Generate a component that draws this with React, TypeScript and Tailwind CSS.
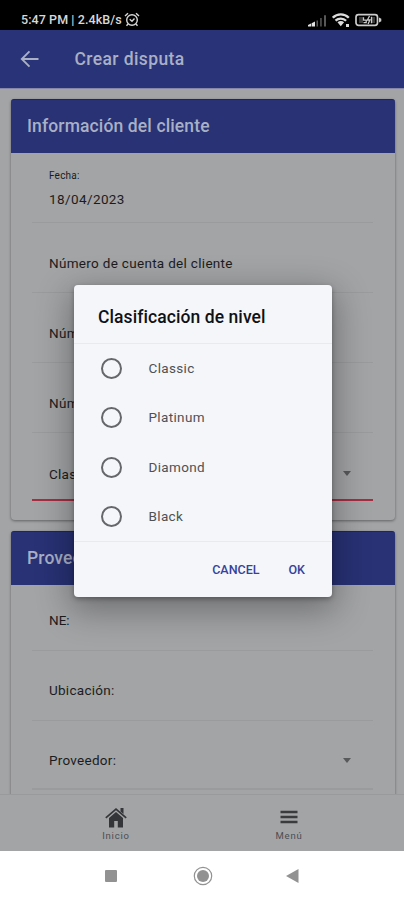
import type { ReactNode } from "react";

function StatusBar() {
  return (
    <div className="flex h-[30px] shrink-0 items-end justify-between bg-black pr-[22px] pb-[3px] pl-[21px] text-[#d8d8d8]">
      <div className="flex items-center gap-[2px]">
        <span className="w-[101px] text-[12.500px] leading-[14px] font-medium tracking-[0.080px] whitespace-nowrap">5:47 PM | 2.4kB/s</span>
        <svg width="16" height="15" viewBox="0 0 16 15" fill="none" stroke="currentColor" strokeWidth="1.4">
          <circle cx="8" cy="8" r="5.3" />
          <path d="M1 4 4 1.2M15 4l-3-2.8M5.7 7.3 8 9.3l2.5-2.7M4 12l-1.5 1.8M12 12l1.5 1.8" />
        </svg>
      </div>
      <div className="flex items-center gap-[5px]">
        <svg width="19" height="13" viewBox="0 0 19 13">
          <path d="M0 12.5V11l3-1.4v2.9zM3.6 12.5V9.2L7 7.4v5.1z" fill="#e2e2e2" />
          <path d="M8.5 12.5V6.5h1.500v6zM12.2 12.5V4h1.500v8.500zM16 12.500V1.200h2v11.300z" fill="#585858" />
        </svg>
        <svg width="18" height="14" viewBox="0 0 18 14" fill="none" stroke="#dcdcdc" strokeWidth="2.300">
          <path d="M.8 4.700C5.300.3 12.300.3 16.800 4.700M3.500 7.700c3-2.900 7.700-2.900 10.600 0" />
          <path d="m5.500 9.200 3.300 4 3.300-4c-2-1.500-4.600-1.500-6.600 0z" fill="#dcdcdc" stroke="none" />
          <path d="M14 11h3v3h-3z" fill="#dcdcdc" stroke="none" />
        </svg>
        <svg width="27" height="14" viewBox="0 0 27 14" fill="none" stroke="#ccc" strokeWidth="1.700">
          <rect x="1" y="1.700" width="21.500" height="10.600" rx="2.500" />
          <path d="M24 4.500v5l2.300-1.300V5.800z" fill="#ccc" stroke="none" />
          <path d="M4 4h4v6H4zM16.500 4h3.500v6h-3.500z" fill="#3a3a3a" stroke="none" />
          <path d="M8.500 4.300v2.800h2.700v2.500H8.500M16.500 3.700v6.500M14.500 3 12.400 7h2.500l-1.800 4" strokeWidth="1.300" />
        </svg>
      </div>
    </div>
  );
}

function Caret() {
  return <span className="mr-[22px] h-0 w-0 border-x-[4.5px] border-t-[5px] border-x-transparent border-t-[#58595b]" />;
}

function Row({ children }: { children: ReactNode }) {
  return (
    <div className="mr-[22px] ml-[21px] flex h-[70px] shrink-0 items-center border-b border-[#999b9d] pt-[11px] pl-[17px] text-[13.500px] leading-4 tracking-[0.310px]">
      <span className="whitespace-nowrap">{children}</span>
    </div>
  );
}

function CardTitle({ children }: { children: ReactNode }) {
  return (
    <h2 className="flex h-[54px] shrink-0 items-center rounded-t-[3px] border-t border-[#1c2565] bg-[#283275] pl-[16px] text-[17.500px] font-medium tracking-[0.130px] whitespace-nowrap text-[#a9b0c5]">
      {children}
    </h2>
  );
}

function Tab({ label, children, className }: { label: string; children: ReactNode; className: string }) {
  return (
    <div className={`flex w-[60px] flex-col items-center ${className}`}>
      <div className="flex h-[22px] items-center">{children}</div>
      <span className="mt-[2px] text-[9.500px] leading-3 tracking-[0.800px] text-[#4c4d50]">{label}</span>
    </div>
  );
}

const levels = ["Classic", "Platinum", "Diamond", "Black"];

export default function App() {
  return (
    <div className="relative flex h-[900px] w-[404px] flex-col overflow-hidden bg-[#a3a4a6] font-['Roboto',sans-serif] text-[#1b1c1e]">
      <StatusBar />
      <header className="flex h-[58px] shrink-0 items-center bg-[#293377] pl-[20px] text-[#a9b0c5]">
        <svg width="20" height="18" viewBox="0 0 20 18" fill="none" stroke="currentColor" strokeWidth="1.900">
          <path d="M18.500 9H2M9.500 1.300 1.800 9l7.700 7.700" />
        </svg>
        <h1 className="ml-[34.500px] text-[17.500px] font-medium tracking-[0.400px] whitespace-nowrap">Crear disputa</h1>
      </header>
      <main className="flex min-h-0 flex-1 flex-col gap-[11px] overflow-hidden border-t border-[#8687a8] pt-[10px] pr-[9px] pl-[11px]">
        <section className="flex h-[421px] shrink-0 flex-col rounded-[4px] shadow-[0_1px_3px_rgba(0,0,0,0.400)]">
          <CardTitle>Información del cliente</CardTitle>
          <div className="mr-[22px] ml-[21px] h-[70px] shrink-0 border-b border-[#999b9d] pt-[17px] pl-[17px]">
            <div className="text-[10px] leading-3 tracking-[0.200px]">Fecha:</div>
            <div className="mt-[9px] text-[13.500px] leading-4 tracking-[0.400px]">18/04/2023</div>
          </div>
          <Row>Número de cuenta del cliente</Row>
          <Row>Número de tarjeta</Row>
          <Row>Número de contacto</Row>
          <div className="mr-[22px] ml-[21px] flex h-[68px] shrink-0 items-center justify-between border-b-2 border-[#a62d42] pt-[15px] pl-[17px] text-[13.500px] leading-4 tracking-[0.270px]">
            <span>Clasificación</span>
            <Caret />
          </div>
        </section>
        <section className="flex h-[300px] shrink-0 flex-col rounded-[4px] shadow-[0_1px_3px_rgba(0,0,0,0.400)]">
          <CardTitle>Proveedor</CardTitle>
          <div className="mr-[22px] ml-[21px] flex h-[66px] shrink-0 items-center border-b border-[#999b9d] pt-[6px] pl-[17px] text-[13.500px]">NE:</div>
          <div className="mr-[22px] ml-[21px] flex h-[70px] shrink-0 items-center border-b border-[#999b9d] pt-[10px] pl-[17px] text-[13.500px] tracking-[0.270px]">Ubicación:</div>
          <div className="mr-[22px] ml-[21px] flex h-[69px] shrink-0 items-center justify-between border-b-2 border-[#999b9d] pt-[12px] pl-[17px] text-[13.500px] tracking-[0.270px]">
            <span>Proveedor:</span>
            <Caret />
          </div>
        </section>
      </main>
      <nav className="flex h-[57px] shrink-0 border-t border-[#999a9c] bg-[#a3a4a6] pt-[11px]">
        <Tab label="Inicio" className="ml-[86px]">
          <svg width="22" height="21" viewBox="0 0 22 21" fill="#343538">
            <path d="M4 11 11 5l7 6v9.500h-5.200V14H9.200v6.500H4z" />
            <path d="M.8 10.800 11 2l10.200 8.800" fill="none" stroke="#343538" strokeWidth="1.700" />
            <path d="M15.500 1h3v6l-3-2.600z" />
          </svg>
        </Tab>
        <Tab label="Menú" className="ml-[113px]">
          <svg width="18" height="14" viewBox="0 0 18 14" stroke="#3a3b3d" strokeWidth="2.300">
            <path d="M.5 2h17M.5 7h17M.5 12h17" />
          </svg>
        </Tab>
      </nav>
      <footer className="flex h-[49px] shrink-0 items-center bg-white pl-[105px] text-[#929292]">
        <div className="h-[12px] w-[12px] rounded-[1px] bg-current" />
        <svg className="ml-[76px]" width="20" height="20" viewBox="0 0 20 20">
          <circle cx="10" cy="10" r="8.700" fill="none" stroke="currentColor" strokeWidth="1.200" />
          <circle cx="10" cy="10" r="6" fill="currentColor" />
        </svg>
        <svg className="ml-[73px]" width="13" height="14" viewBox="0 0 13 14" fill="currentColor">
          <path d="M12.500 0v14L0 7z" />
        </svg>
      </footer>

      <div role="dialog" className="absolute top-[285px] left-[74px] flex h-[312px] w-[258px] flex-col rounded-[4px] bg-[#f4f6fa] shadow-[0_10px_34px_4px_rgba(0,0,0,0.320),0_2px_5px_rgba(0,0,0,0.300)]">
        <h2 className="flex h-[59px] shrink-0 items-center border-b border-[#e8eaee] pt-[6px] pl-[24px] text-[17.500px] font-medium tracking-[0.080px] whitespace-nowrap text-[#101114]">
          Clasificación de nivel
        </h2>
        <div className="flex h-[198px] shrink-0 flex-col border-b border-[#e8eaee]">
          {levels.map((level) => (
            <label key={level} className="flex h-[49.500px] items-center pl-[27px] text-[13.500px] tracking-[0.350px] text-[#505154]">
              <span className="h-[21px] w-[21px] rounded-full border-2 border-[#66676a]" />
              <span className="ml-[26.500px] -mt-px">{level}</span>
            </label>
          ))}
        </div>
        <div className="flex flex-1 items-center justify-end gap-[29px] pt-px pr-[27px] text-[12.500px] font-medium text-[#36429a]">
          <button>CANCEL</button>
          <button>OK</button>
        </div>
      </div>
    </div>
  );
}
